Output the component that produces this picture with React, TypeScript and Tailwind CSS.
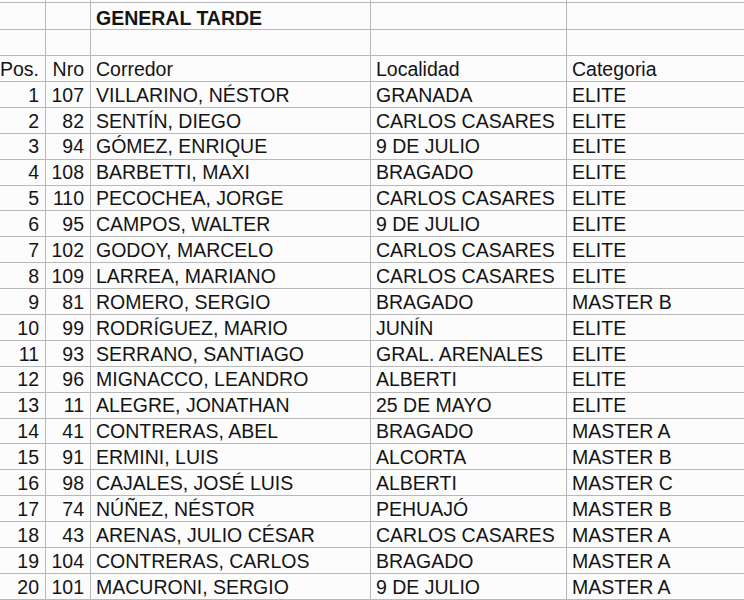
const rows: [number, number, string, string, string][] = [
  [1, 107, "VILLARINO, NÉSTOR", "GRANADA", "ELITE"],
  [2, 82, "SENTÍN, DIEGO", "CARLOS CASARES", "ELITE"],
  [3, 94, "GÓMEZ, ENRIQUE", "9 DE JULIO", "ELITE"],
  [4, 108, "BARBETTI, MAXI", "BRAGADO", "ELITE"],
  [5, 110, "PECOCHEA, JORGE", "CARLOS CASARES", "ELITE"],
  [6, 95, "CAMPOS, WALTER", "9 DE JULIO", "ELITE"],
  [7, 102, "GODOY, MARCELO", "CARLOS CASARES", "ELITE"],
  [8, 109, "LARREA, MARIANO", "CARLOS CASARES", "ELITE"],
  [9, 81, "ROMERO, SERGIO", "BRAGADO", "MASTER B"],
  [10, 99, "RODRÍGUEZ, MARIO", "JUNÍN", "ELITE"],
  [11, 93, "SERRANO, SANTIAGO", "GRAL. ARENALES", "ELITE"],
  [12, 96, "MIGNACCO, LEANDRO", "ALBERTI", "ELITE"],
  [13, 11, "ALEGRE, JONATHAN", "25 DE MAYO", "ELITE"],
  [14, 41, "CONTRERAS, ABEL", "BRAGADO", "MASTER A"],
  [15, 91, "ERMINI, LUIS", "ALCORTA", "MASTER B"],
  [16, 98, "CAJALES, JOSÉ LUIS", "ALBERTI", "MASTER C"],
  [17, 74, "NÚÑEZ, NÉSTOR", "PEHUAJÓ", "MASTER B"],
  [18, 43, "ARENAS, JULIO CÉSAR", "CARLOS CASARES", "MASTER A"],
  [19, 104, "CONTRERAS, CARLOS", "BRAGADO", "MASTER A"],
  [20, 101, "MACURONI, SERGIO", "9 DE JULIO", "MASTER A"],
];

const line = "border-r border-[#b8b8b8]";

function Row({
  cells,
  height,
  bold = false,
}: {
  cells: (string | number)[];
  height: string;
  bold?: boolean;
}) {
  const pad = bold ? "pt-[5px]" : "pt-[2px]";
  return (
    <div
      className={`grid grid-cols-[46px_45px_280px_196px_1fr] border-b border-[#b8b8b8] ${height} ${
        bold ? "font-bold" : ""
      }`}
    >
      <div className={`${line} ${pad} flex items-center justify-end pr-[6px]`}>{cells[0]}</div>
      <div className={`${line} ${pad} flex items-center justify-end pr-[6px]`}>{cells[1]}</div>
      <div className={`${line} ${pad} flex items-center pl-[5px] whitespace-nowrap`}>{cells[2]}</div>
      <div className={`${line} ${pad} flex items-center pl-[5px] whitespace-nowrap`}>{cells[3]}</div>
      <div className={`${pad} flex items-center pl-[5px] whitespace-nowrap`}>{cells[4]}</div>
    </div>
  );
}

export default function App() {
  return (
    <div
      className="w-[744px] h-[600px] overflow-hidden bg-[#fcfcfc] text-[#141414] text-[19.5px] leading-none"
      style={{ fontFamily: '"Liberation Sans", Arial, sans-serif' }}
    >
      <Row cells={["", "", "", "", ""]} height="h-[3px]" />
      <Row cells={["", "", "GENERAL TARDE", "", ""]} height="h-[27px]" bold />
      <Row cells={["", "", "", "", ""]} height="h-[26px]" />
      <Row cells={["Pos.", "Nro", "Corredor", "Localidad", "Categoria"]} height="h-[26px]" />
      {rows.map((r) => (
        <Row key={r[0]} cells={r} height="h-[25.9px]" />
      ))}
    </div>
  );
}
